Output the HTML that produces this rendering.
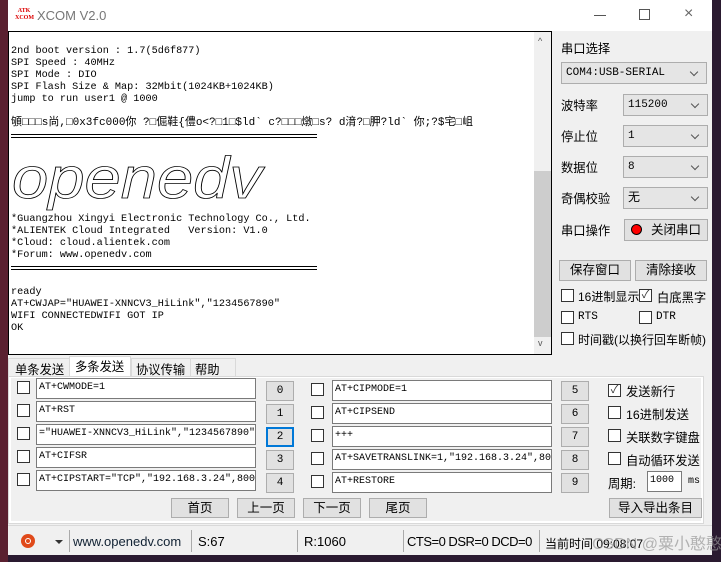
<!DOCTYPE html>
<html><head><meta charset="utf-8"><style>
*{margin:0;padding:0;box-sizing:border-box}
body{width:721px;height:562px;overflow:hidden;background:#2a1a30;position:relative;font-family:"Liberation Sans","Noto Sans CJK SC",sans-serif;font-size:12px;color:#000}
.a{position:absolute}
.win{left:8px;top:0;width:704px;height:555px;background:#f0f0f0}
.title{left:8px;top:0;width:704px;height:31px;background:#fff}
.mono{font-family:"Liberation Mono","Noto Sans CJK SC",monospace;font-size:10px;line-height:12px;white-space:pre}
.combo{background:#e5e5e5;border:1px solid #adadad;height:22px;font-family:"Liberation Mono","Noto Sans CJK SC",monospace;font-size:11px;line-height:20px;padding-left:4px}
.combo:after{content:"";position:absolute;right:9px;top:6px;width:5px;height:5px;border-right:1px solid #555;border-bottom:1px solid #555;transform:rotate(45deg)}
.btn{background:#e1e1e1;border:1px solid #adadad;text-align:center;font-size:12.5px}
.cb{width:13px;height:13px;border:1px solid #333;background:#fff}
.lbl{font-size:12.3px;white-space:nowrap}
.tb{background:#fff;border:1px solid #7a7a7a;font-family:"Liberation Mono","Noto Sans CJK SC",monospace;font-size:10px;line-height:18px;padding-left:2px;white-space:nowrap;overflow:hidden}
.nb{background:#e1e1e1;border:1px solid #adadad;width:28px;height:20px;text-align:center;font-family:"Liberation Mono",monospace;font-size:11px;line-height:18px}
.dl{height:4px;border-top:1px solid #000;border-bottom:1px solid #000}
</style></head><body>
<div class="a" style="left:0;top:0;width:8px;height:562px;background:#5a2030"></div>
<div class="a win"></div>
<div class="a title"></div>
<div class="a" style="left:15px;top:8px;color:#d00;font-size:6px;line-height:7px;font-weight:bold;font-family:'Liberation Serif',serif;width:18px;text-align:center">ATK<br>XCOM</div>
<div class="a" style="left:37px;top:8px;font-size:13px;color:#777">XCOM V2.0</div>
<div class="a" style="left:594px;top:15px;width:12px;height:1px;background:#555"></div>
<div class="a" style="left:639px;top:9px;width:11px;height:11px;border:1px solid #555"></div>
<div class="a" style="left:684px;top:5px;font-size:16px;color:#666">×</div>

<div class="a" style="left:8px;top:31px;width:544px;height:324px;background:#fff;border:1px solid #000"></div>
<div class="a" style="left:534px;top:32px;width:17px;height:322px;background:#f0f0f0"></div>
<div class="a" style="left:534px;top:171px;width:17px;height:166px;background:#cdcdcd"></div>
<div class="a" style="left:538px;top:36px;font-size:9px;color:#555">^</div>
<div class="a" style="left:538px;top:338px;font-size:9px;color:#555">v</div>
<div class="a mono" style="left:11px;top:46px;font-size:10.2px">2nd boot version : 1.7(5d6f877)
SPI Speed : 40MHz
SPI Mode : DIO
SPI Flash Size &amp; Map: 32Mbit(1024KB+1024KB)
jump to run user1 @ 1000</div>
<div class="a mono" style="left:11px;top:117px;font-size:11px">䪷□□□s尚,□0x3fc000你 ?□倔鞋{僼o&lt;?□1□$ld` c?□□□燉□s? d湇?□胛?ld` 你;?$宅□岨</div>
<div class="a dl" style="left:11px;top:134px;width:306px"></div>
<svg class="a" style="left:10px;top:150px" width="260" height="66">
<text x="2" y="48" font-family="Liberation Sans,sans-serif" font-size="58" font-style="italic" fill="none" stroke="#000" stroke-width="0.8" textLength="250" lengthAdjust="spacingAndGlyphs">openedv</text></svg>
<div class="a mono" style="left:11px;top:214px;font-size:10.2px">*Guangzhou Xingyi Electronic Technology Co., Ltd.
*ALIENTEK Cloud Integrated   Version: V1.0
*Cloud: cloud.alientek.com
*Forum: www.openedv.com</div>
<div class="a dl" style="left:11px;top:266px;width:306px"></div>
<div class="a mono" style="left:11px;top:287px;font-size:10.2px">ready
AT+CWJAP="HUAWEI-XNNCV3_HiLink","1234567890"
WIFI CONNECTEDWIFI GOT IP
OK</div>

<div class="a lbl" style="left:561px;top:39px">串口选择</div>
<div class="a combo" style="left:561px;top:62px;width:146px">COM4:USB-SERIAL</div>
<div class="a lbl" style="left:561px;top:96px">波特率</div>
<div class="a combo" style="left:623px;top:94px;width:85px">115200</div>
<div class="a lbl" style="left:561px;top:127px">停止位</div>
<div class="a combo" style="left:623px;top:125px;width:85px">1</div>
<div class="a lbl" style="left:561px;top:158px">数据位</div>
<div class="a combo" style="left:623px;top:156px;width:85px">8</div>
<div class="a lbl" style="left:561px;top:189px">奇偶校验</div>
<div class="a combo" style="left:623px;top:187px;width:85px;font-size:12px">无</div>
<div class="a lbl" style="left:561px;top:221px">串口操作</div>
<div class="a btn" style="left:624px;top:219px;width:84px;height:22px;line-height:20px;padding-left:20px">关闭串口</div>
<div class="a" style="left:631px;top:224px;width:11px;height:11px;border-radius:50%;background:#f00;border:1px solid #000"></div>
<div class="a btn" style="left:559px;top:260px;width:72px;height:21px;line-height:19px">保存窗口</div>
<div class="a btn" style="left:635px;top:260px;width:72px;height:21px;line-height:19px">清除接收</div>
<div class="a cb" style="left:561px;top:289px"></div><div class="a lbl" style="left:578px;top:288px;font-size:12px">16进制显示</div>
<div class="a cb" style="left:639px;top:289px;font-size:11px;line-height:10px;text-align:center;color:#333">✓</div><div class="a lbl" style="left:657px;top:288px">白底黑字</div>
<div class="a cb" style="left:561px;top:311px"></div><div class="a lbl" style="left:578px;top:311px;font-family:'Liberation Mono',monospace;font-size:11px">RTS</div>
<div class="a cb" style="left:639px;top:311px"></div><div class="a lbl" style="left:656px;top:311px;font-family:'Liberation Mono',monospace;font-size:11px">DTR</div>
<div class="a cb" style="left:561px;top:332px"></div><div class="a lbl" style="left:578px;top:331px;font-size:12px">时间戳(以换行回车断帧)</div>

<div class="a" style="left:8px;top:358px;width:228px;height:19px;background:#f0f0f0;border:1px solid #d9d9d9"></div>
<div class="a lbl" style="left:15px;top:360px">单条发送</div>
<div class="a" style="left:69px;top:356px;width:62px;height:21px;background:#fff;border:1px solid #d9d9d9;border-bottom:none"></div>
<div class="a lbl" style="left:75px;top:357px">多条发送</div>
<div class="a" style="left:131px;top:359px;width:1px;height:18px;background:#d9d9d9"></div>
<div class="a lbl" style="left:136px;top:360px">协议传输</div>
<div class="a" style="left:190px;top:359px;width:1px;height:18px;background:#d9d9d9"></div>
<div class="a lbl" style="left:195px;top:360px">帮助</div>
<div class="a" style="left:8px;top:376px;width:696px;height:148px;background:#fff;border:1px solid #d9d9d9"></div>
<div class="a" style="left:11px;top:378px;width:690px;height:143px;background:#f0f0f0"></div>

<div class="a cb" style="left:17px;top:381px"></div><div class="a tb" style="left:36px;top:378px;width:220px;height:21px">AT+CWMODE=1</div>
<div class="a cb" style="left:17px;top:404px"></div><div class="a tb" style="left:36px;top:401px;width:220px;height:21px">AT+RST</div>
<div class="a cb" style="left:17px;top:427px"></div><div class="a tb" style="left:36px;top:424px;width:220px;height:21px">="HUAWEI-XNNCV3_HiLink","1234567890"</div>
<div class="a cb" style="left:17px;top:450px"></div><div class="a tb" style="left:36px;top:447px;width:220px;height:21px">AT+CIFSR</div>
<div class="a cb" style="left:17px;top:473px"></div><div class="a tb" style="left:36px;top:470px;width:220px;height:21px">AT+CIPSTART="TCP","192.168.3.24",800</div>
<div class="a nb" style="left:266px;top:381px">0</div>
<div class="a nb" style="left:266px;top:404px">1</div>
<div class="a nb" style="left:266px;top:427px;border:2px solid #0078d7;line-height:16px">2</div>
<div class="a nb" style="left:266px;top:450px">3</div>
<div class="a nb" style="left:266px;top:473px">4</div>

<div class="a cb" style="left:311px;top:383px"></div><div class="a tb" style="left:332px;top:380px;width:220px;height:21px">AT+CIPMODE=1</div>
<div class="a cb" style="left:311px;top:406px"></div><div class="a tb" style="left:332px;top:403px;width:220px;height:21px">AT+CIPSEND</div>
<div class="a cb" style="left:311px;top:429px"></div><div class="a tb" style="left:332px;top:426px;width:220px;height:21px">+++</div>
<div class="a cb" style="left:311px;top:452px"></div><div class="a tb" style="left:332px;top:449px;width:220px;height:21px">AT+SAVETRANSLINK=1,"192.168.3.24",80</div>
<div class="a cb" style="left:311px;top:475px"></div><div class="a tb" style="left:332px;top:472px;width:220px;height:21px">AT+RESTORE</div>
<div class="a nb" style="left:561px;top:381px">5</div>
<div class="a nb" style="left:561px;top:404px">6</div>
<div class="a nb" style="left:561px;top:427px">7</div>
<div class="a nb" style="left:561px;top:450px">8</div>
<div class="a nb" style="left:561px;top:473px">9</div>

<div class="a cb" style="left:608px;top:384px;font-size:11px;line-height:10px;text-align:center;color:#333">✓</div><div class="a lbl" style="left:626px;top:382px">发送新行</div>
<div class="a cb" style="left:608px;top:406px"></div><div class="a lbl" style="left:626px;top:405px">16进制发送</div>
<div class="a cb" style="left:608px;top:429px"></div><div class="a lbl" style="left:626px;top:428px">关联数字键盘</div>
<div class="a cb" style="left:608px;top:452px"></div><div class="a lbl" style="left:626px;top:451px">自动循环发送</div>
<div class="a lbl" style="left:608px;top:474px">周期:</div>
<div class="a tb" style="left:647px;top:471px;width:35px;height:21px">1000</div>
<div class="a lbl" style="left:688px;top:476px;font-family:'Liberation Mono',monospace;font-size:10px">ms</div>

<div class="a btn" style="left:171px;top:498px;width:58px;height:20px;line-height:18px">首页</div>
<div class="a btn" style="left:237px;top:498px;width:58px;height:20px;line-height:18px">上一页</div>
<div class="a btn" style="left:303px;top:498px;width:58px;height:20px;line-height:18px">下一页</div>
<div class="a btn" style="left:369px;top:498px;width:58px;height:20px;line-height:18px">尾页</div>
<div class="a btn" style="left:609px;top:498px;width:93px;height:20px;line-height:18px">导入导出条目</div>

<div class="a" style="left:8px;top:525px;width:704px;height:1px;background:#d9d9d9"></div>
<div class="a" style="left:21px;top:534px;width:14px;height:14px;border-radius:50%;background:#e04a1a"></div>
<div class="a" style="left:25px;top:538px;width:6px;height:6px;border-radius:50%;border:1.5px solid #fff"></div>
<div class="a" style="left:55px;top:540px;width:0;height:0;border-left:4px solid transparent;border-right:4px solid transparent;border-top:4px solid #333"></div>
<div class="a" style="left:69px;top:530px;width:1px;height:22px;background:#aaa"></div>
<div class="a" style="left:73px;top:534px;font-size:13px;color:#123">www.openedv.com</div>
<div class="a" style="left:191px;top:530px;width:1px;height:22px;background:#aaa"></div>
<div class="a" style="left:198px;top:534px;font-size:13px">S:67</div>
<div class="a" style="left:297px;top:530px;width:1px;height:22px;background:#aaa"></div>
<div class="a" style="left:304px;top:534px;font-size:13px">R:1060</div>
<div class="a" style="left:403px;top:530px;width:1px;height:22px;background:#aaa"></div>
<div class="a" style="left:407px;top:534px;font-size:13px;letter-spacing:-0.5px">CTS=0 DSR=0 DCD=0</div>
<div class="a" style="left:539px;top:530px;width:1px;height:22px;background:#aaa"></div>
<div class="a" style="left:545px;top:535px;font-size:12px;white-space:nowrap">当前时间 09:08:07</div>
<div class="a" style="left:592px;top:530px;font-size:16px;color:rgba(150,150,150,.7);white-space:nowrap">CSDN @粟小憨憨</div>
</body></html>
